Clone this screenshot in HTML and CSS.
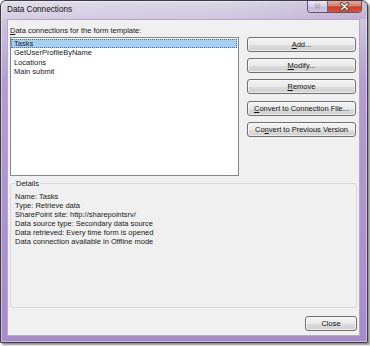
FILE: index.html
```html
<!DOCTYPE html>
<html>
<head>
<meta charset="utf-8">
<link rel="stylesheet" href="styles.css">
</head>
<body>
<div class="window">
  <div class="titlebar">
    <span class="title">Data Connections</span>
    <div class="caption-buttons">
      <div class="cap help">?</div>
      <div class="cap close">
        <svg width="11" height="9" viewBox="0 0 11 9">
          <path d="M2.5 1.5 L8.5 7.5 M8.5 1.5 L2.5 7.5" stroke="#5b2a22" stroke-width="3" stroke-linecap="round"/>
          <path d="M2.5 1.5 L8.5 7.5 M8.5 1.5 L2.5 7.5" stroke="#ffffff" stroke-width="1.5" stroke-linecap="round"/>
        </svg>
      </div>
    </div>
  </div>
  <div class="client">
    <div class="label"><u>D</u>ata connections for the form template:</div>
    <div class="main">
      <div class="listbox">
        <div class="item selected">Tasks</div>
        <div class="item">GetUserProfileByName</div>
        <div class="item">Locations</div>
        <div class="item">Main submit</div>
      </div>
      <div class="buttons">
        <div class="btn"><u>A</u>dd...</div>
        <div class="btn"><u>M</u>odify...</div>
        <div class="btn"><u>R</u>emove</div>
        <div class="btn"><u>C</u>onvert to Connection File...</div>
        <div class="btn">Co<u>n</u>vert to Previous Version</div>
      </div>
    </div>
    <fieldset class="details">
      <legend>Details</legend>
      <div class="line">Name: Tasks</div>
      <div class="line">Type: Retrieve data</div>
      <div class="line">SharePoint site: http://sharepointsrv/</div>
      <div class="line">Data source type: Secondary data source</div>
      <div class="line">Data retrieved: Every time form is opened</div>
      <div class="line">Data connection available in Offline mode</div>
    </fieldset>
    <div class="footer">
      <div class="btn close-btn">Close</div>
    </div>
  </div>
</div>
</body>
</html>
```
FILE: styles.css
```css
* { box-sizing: border-box; }
html, body {
  margin: 0;
  padding: 0;
  background: #ffffff;
}
body {
  width: 370px;
  height: 346px;
  overflow: hidden;
  font-family: "Liberation Sans", Arial, sans-serif;
  font-size: 7.5px;
  color: #1a1a1a;
}
.window {
  width: 368px;
  height: 343px;
  border: 1px solid #3d3a48;
  border-radius: 6px 6px 1px 1px;
  background: linear-gradient(to bottom, #dcd7e4 0, #d0c6de 18px, #b39dd2 80px, #a68bca 100%);
  box-shadow: 2px 2px 2px rgba(0,0,0,0.45), inset 0 0 0 1px rgba(255,255,255,0.45);
  display: flex;
  flex-direction: column;
}
.titlebar {
  height: 18px;
  display: flex;
  align-items: flex-start;
  padding-left: 6px;
  background: linear-gradient(to right, rgba(255,255,255,0.15) 0, rgba(255,255,255,0) 60%, rgba(150,120,190,0.25) 100%);
  border-radius: 5px 5px 0 0;
}
.title {
  font-size: 8.2px;
  color: #111;
  line-height: 18px;
  flex: 1;
}
.caption-buttons {
  display: flex;
  margin-right: 5px;
  border: 1px solid #5e5470;
  border-top: none;
  border-radius: 0 0 4px 4px;
  overflow: hidden;
  height: 12px;
}
.cap {
  height: 11px;
  display: flex;
  align-items: center;
  justify-content: center;
}
.help {
  width: 20px;
  border-right: 1px solid #6d6080;
  background: linear-gradient(to bottom, #ece7f2 0, #d8cde6 50%, #c6b7dc 51%, #cfc2e2 100%);
  color: #ffffff;
  font-weight: bold;
  font-size: 8px;
  text-shadow: 0 0 1px #333, 0 0 1px #333;
}
.close {
  width: 33px;
  background: linear-gradient(to bottom, #e9a99a 0, #dc7a66 45%, #c7402a 55%, #d2553c 100%);
}
.client {
  flex: 1;
  margin: 0 7px 6px 6px;
  border: 1px solid #b4a8c6;
  background: #f0f0f0;
  padding: 6px 2px 4px 2px;
  display: flex;
  flex-direction: column;
}
.label {
  height: 10px;
  line-height: 10px;
  margin-bottom: 1px;
}
.main {
  display: flex;
  gap: 8px;
  height: 139px;
}
.listbox {
  width: 229px;
  height: 139px;
  background: #ffffff;
  border: 1px solid #82878f;
  padding: 1px 0 0 0;
}
.item {
  height: 9.3px;
  line-height: 9px;
  padding-left: 2px;
  margin: 0 1px 0 0;
  border: 1px solid transparent;
  border-top: 0;
  border-bottom: 0;
}
.item.selected {
  background: #a6d1f6;
  border: 1px dotted #4d6f8f;
  line-height: 7px;
}
.buttons {
  width: 109px;
  display: flex;
  flex-direction: column;
  gap: 6.2px;
}
.btn {
  height: 15px;
  border: 1px solid #707070;
  border-radius: 3px;
  background: linear-gradient(to bottom, #f3f3f3 0, #ebebeb 50%, #dddddd 51%, #cfcfcf 100%);
  box-shadow: inset 0 0 0 1px rgba(255,255,255,0.6);
  display: flex;
  align-items: center;
  justify-content: center;
  color: #111;
  white-space: nowrap;
}
.details {
  margin: 3px 0 0 0;
  height: 129px;
  border: 1px solid #d3dbe2;
  border-radius: 3px;
  padding: 4px 4px 0 4px;
}
.details legend {
  padding: 0 1px;
  margin-left: 0;
  line-height: 9px;
  color: #1a1a1a;
}
.line {
  height: 9px;
  line-height: 9px;
}
.footer {
  margin-top: 8px;
  display: flex;
  justify-content: flex-end;
}
.close-btn {
  width: 52px;
}
```
